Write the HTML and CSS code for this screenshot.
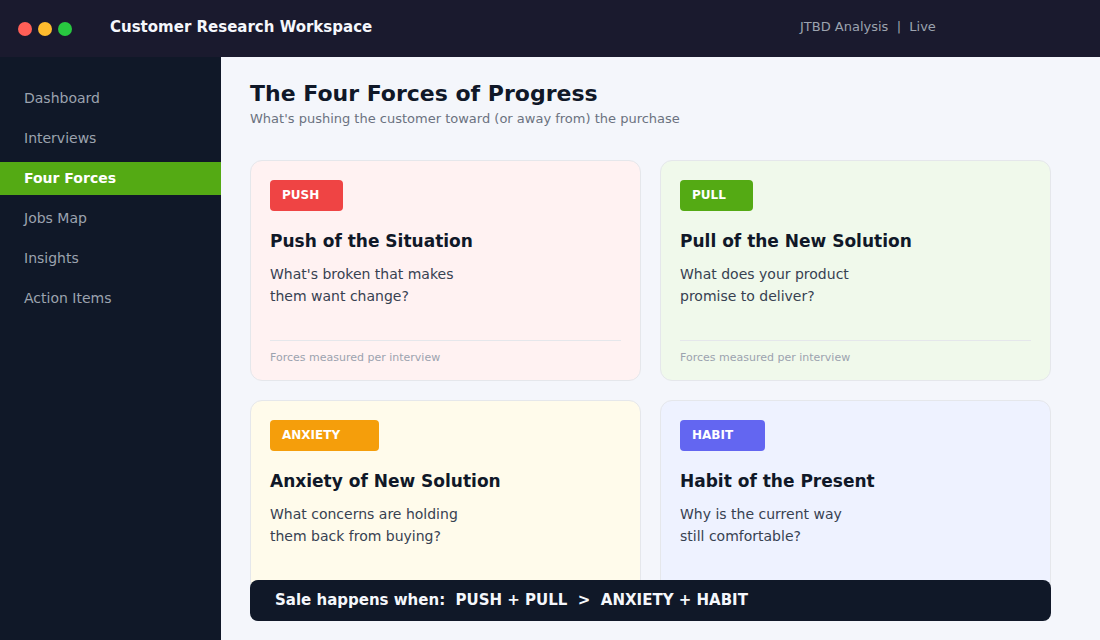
FILE: index.html
```html
<!DOCTYPE html>
<html lang="en">
  <head>
    <meta charset="UTF-8" />
    <title>Customer Research Workspace</title>
    <link rel="stylesheet" href="styles.css">
  </head>
  <body>
    <header class="topbar">
      <div class="dots">
        <span class="dot dot-red"></span>
        <span class="dot dot-yellow"></span>
        <span class="dot dot-green"></span>
      </div>
      <div class="app-title">Customer Research Workspace</div>
      <div class="app-status">JTBD Analysis &nbsp;|&nbsp; Live</div>
    </header>

    <div class="layout">
      <nav class="sidebar">
        <a class="nav-item">Dashboard</a>
        <a class="nav-item">Interviews</a>
        <a class="nav-item active">Four Forces</a>
        <a class="nav-item">Jobs Map</a>
        <a class="nav-item">Insights</a>
        <a class="nav-item">Action Items</a>
      </nav>

      <main class="content">
        <h1>The Four Forces of Progress</h1>
        <p class="subtitle">What's pushing the customer toward (or away from) the purchase</p>

        <div class="forces">
          <section class="card card-push">
            <span class="badge badge-push">PUSH</span>
            <h2>Push of the Situation</h2>
            <p class="question">What's broken that makes<br>them want change?</p>
            <div class="card-foot">Forces measured per interview</div>
          </section>
          <section class="card card-pull">
            <span class="badge badge-pull">PULL</span>
            <h2>Pull of the New Solution</h2>
            <p class="question">What does your product<br>promise to deliver?</p>
            <div class="card-foot">Forces measured per interview</div>
          </section>
          <section class="card card-anxiety">
            <span class="badge badge-anxiety">ANXIETY</span>
            <h2>Anxiety of New Solution</h2>
            <p class="question">What concerns are holding<br>them back from buying?</p>
          </section>
          <section class="card card-habit">
            <span class="badge badge-habit">HABIT</span>
            <h2>Habit of the Present</h2>
            <p class="question">Why is the current way<br>still comfortable?</p>
          </section>
        </div>

        <div class="formula">Sale happens when: &nbsp;PUSH + PULL &nbsp;&gt;&nbsp; ANXIETY + HABIT</div>
      </main>
    </div>
  </body>
</html>
```

FILE: styles.css
```css
* {
  box-sizing: border-box;
}

html,
body {
  height: 100%;
}

body {
  margin: 0;
  overflow: hidden;
  font-family: "DejaVu Sans", sans-serif;
  background-color: #f4f6fb;
  color: #101828;
}

.topbar {
  display: flex;
  align-items: center;
  height: 57px;
  padding: 0 0 4px 18px;
  background-color: #1a1a2e;
}

.dots {
  display: flex;
  gap: 6px;
  width: 92px;
  margin-top: 4px;
}

.dot {
  width: 14px;
  height: 14px;
  border-radius: 50%;
}

.dot-red {
  background-color: #ff5f57;
}

.dot-yellow {
  background-color: #febc2e;
}

.dot-green {
  background-color: #28c840;
}

.app-title {
  width: 690px;
  font-size: 15px;
  font-weight: bold;
  color: #f5f7fc;
}

.app-status {
  font-size: 13px;
  color: #9ca3af;
}

.layout {
  display: flex;
  height: 583px;
}

.sidebar {
  display: flex;
  flex-direction: column;
  gap: 7px;
  flex: none;
  width: 221px;
  padding-top: 25px;
  background-color: #101828;
}

.nav-item {
  height: 33px;
  padding-left: 24px;
  font-size: 14px;
  line-height: 33px;
  color: #9ca3af;
}

.nav-item.active {
  font-weight: bold;
  color: #ffffff;
  background-color: #54aa14;
}

.content {
  position: relative;
  flex: 1;
  padding: 24px 49px 0 29px;
}

h1 {
  margin: 0;
  font-size: 22px;
  line-height: 26px;
  color: #101828;
}

.subtitle {
  margin: 4px 0 0 0;
  font-size: 13px;
  line-height: 16px;
  color: #6b7280;
}

.forces {
  display: grid;
  grid-template-columns: 391px 391px;
  grid-auto-rows: 221px;
  gap: 19px;
  margin-top: 33px;
}

.card {
  display: flex;
  flex-direction: column;
  align-items: flex-start;
  padding: 19px 19px 16px;
  border: 1px solid #e5e7eb;
  border-radius: 12px;
}

.card-push {
  background-color: #fff2f2;
}

.card-pull {
  background-color: #f0f9eb;
}

.card-anxiety {
  background-color: #fffbeb;
}

.card-habit {
  background-color: #eef2ff;
}

.badge {
  height: 31px;
  padding-left: 12px;
  border-radius: 4px;
  font-size: 12px;
  font-weight: bold;
  line-height: 31px;
  color: #ffffff;
}

.badge-push {
  width: 73px;
  background-color: #ef4444;
}

.badge-pull {
  width: 73px;
  background-color: #54aa14;
}

.badge-anxiety {
  width: 109px;
  background-color: #f59e0b;
}

.badge-habit {
  width: 85px;
  background-color: #6366f1;
}

h2 {
  margin: 20px 0 0 0;
  font-size: 17px;
  line-height: 20px;
  color: #101828;
}

.question {
  margin: 12px 0 0 0;
  font-size: 14px;
  line-height: 22px;
  color: #374151;
}

.card-foot {
  align-self: stretch;
  margin-top: auto;
  padding-top: 10px;
  border-top: 1px solid #e5e7eb;
  font-size: 11px;
  line-height: 13px;
  color: #9ca3af;
}

.formula {
  position: absolute;
  left: 29px;
  top: 523px;
  width: 801px;
  height: 41px;
  padding-left: 25px;
  border-radius: 8px;
  font-size: 15px;
  font-weight: bold;
  line-height: 41px;
  color: #f5f7fc;
  background-color: #101828;
}
```
